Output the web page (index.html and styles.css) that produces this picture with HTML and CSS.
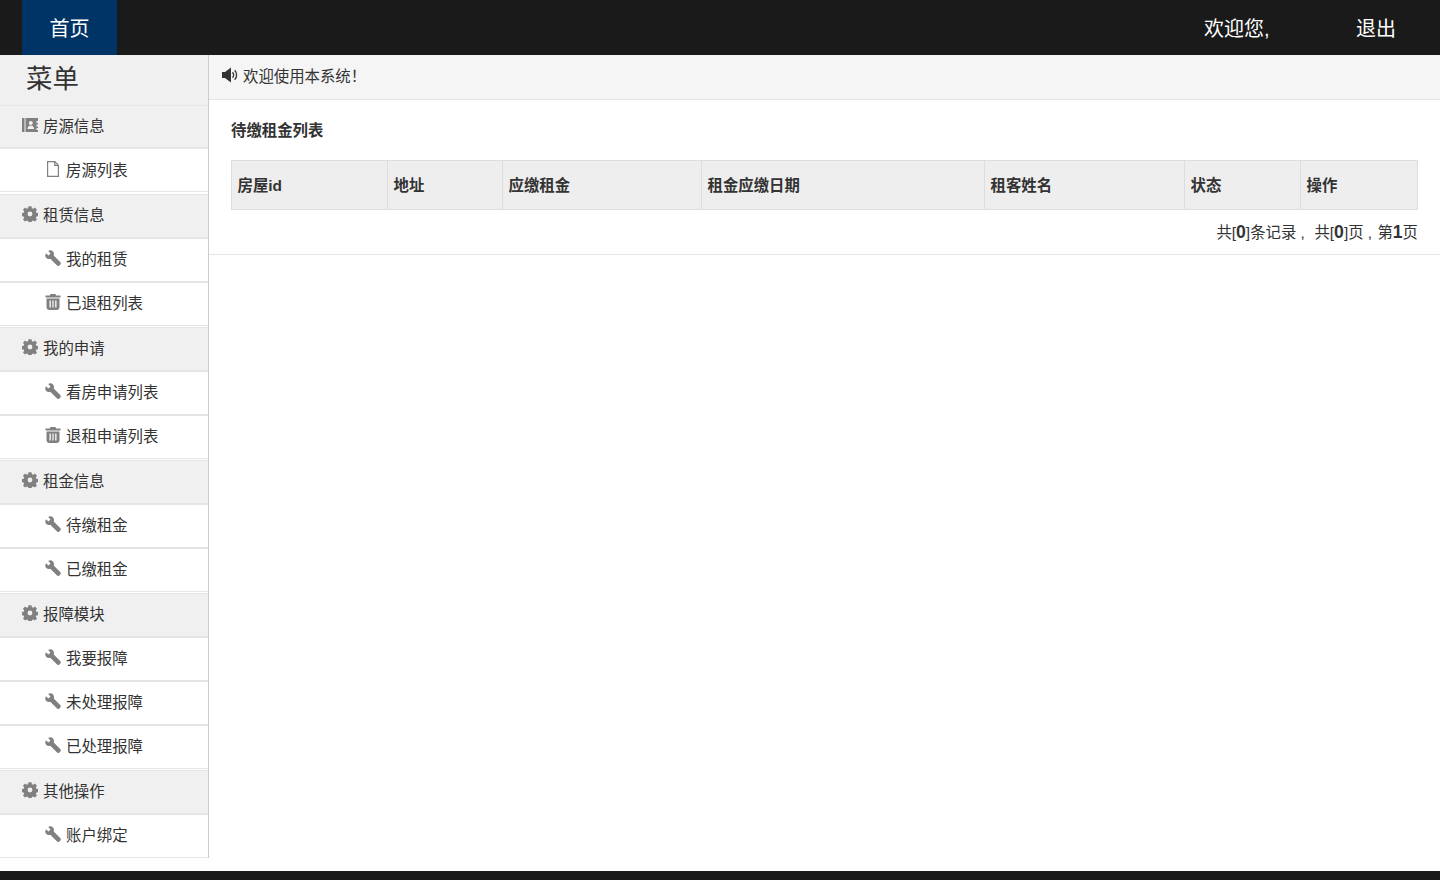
FILE: index.html
```html
<!DOCTYPE html>
<html lang="zh-CN">
<head>
<meta charset="utf-8">
<title>首页</title>
<link rel="stylesheet" href="styles.css">
</head>
<body>
<svg class="defs" width="0" height="0" aria-hidden="true">
  <symbol id="i-cog" viewBox="0 0 16 16"><path fill-rule="evenodd" d="M6.500.2h3l.4 2 1.300.6 1.700-1.200 2.100 2.100-1.200 1.700.6 1.300 2 .4v3l-2 .4-.6 1.300 1.200 1.700-2.100 2.100-1.700-1.200-1.300.6-.4 2h-3l-.4-2-1.300-.6-1.700 1.200-2.100-2.100 1.200-1.700-.6-1.300-2-.4v-3l2-.4.6-1.300-1.200-1.700 2.100-2.100 1.700 1.200 1.300-.6zM8 5.600a2.400 2.400 0 1 0 0 4.800 2.400 2.400 0 0 0 0-4.800z"/></symbol>
  <symbol id="i-book" viewBox="0 0 16 16"><path fill-rule="evenodd" d="M0 1h2.500v14H0zM3.500 1H16v3h-1.500v2H16v1.500h-1.500v2H16V11h-1.500v2H16v2H3.500zM8.800 4a2 2 0 1 0 0 4 2 2 0 0 0 0-4zM5.500 12h6.500c0-2.200-1.200-3.500-3.200-3.500S5.500 9.800 5.500 12z"/></symbol>
  <symbol id="i-file" viewBox="0 0 16 16"><path fill="none" stroke="currentColor" stroke-width="1.200" d="M2.600.6h7.300l3.500 3.600v11.200H2.600zM9.700.8v3.600h3.600"/></symbol>
  <symbol id="i-wrench" viewBox="0 0 16 16"><path d="M1 3.200 3.400 5.500 5.500 3.400 3.200 1C4.800-.1 6.900.2 8 1.400c1 1 1.300 2.600.7 4l6.500 6.500c.8.800.8 1.900.1 2.600l-.9.900c-.7.700-1.800.7-2.600-.1L5.300 8.800c-1.400.6-3 .3-4-.7C.1 6.900-.1 4.800 1 3.200z"/></symbol>
  <symbol id="i-trash" viewBox="0 0 16 16"><path fill-rule="evenodd" d="M5.500 0h5l.6 1.500H15.500v2H.5v-2h4.400zM1.500 4.500h13v8.500c0 1.700-1.200 3-2.900 3H4.400c-1.700 0-2.900-1.300-2.900-3zm3 2v7h1.300v-7zm2.900 0v7h1.200v-7zm2.800 0v7h1.300v-7z"/></symbol>
  <symbol id="i-volume" viewBox="0 0 16 16"><path d="M0 5h3L9 .5v15L3 11H0z"/><path fill="none" stroke="currentColor" stroke-width="1.300" d="M10.500 5.300c1.300 1.500 1.300 3.900 0 5.400M12.700 3.200c2.500 2.700 2.500 6.900 0 9.600"/></symbol>
</svg>

<header class="topbar">
  <a class="home">首页</a>
  <div class="user">
    <span class="welcome">欢迎您,</span>
    <a class="logout">退出</a>
  </div>
</header>

<div class="layout">
  <nav class="sidebar">
    <div class="menu-title">菜单</div>

    <div class="group group-first">
      <div class="section"><svg class="icon"><use href="#i-book"/></svg>房源信息</div>
      <a class="item"><svg class="icon"><use href="#i-file"/></svg>房源列表</a>
    </div>

    <div class="group">
      <div class="section"><svg class="icon"><use href="#i-cog"/></svg>租赁信息</div>
      <a class="item"><svg class="icon"><use href="#i-wrench"/></svg>我的租赁</a>
      <a class="item"><svg class="icon"><use href="#i-trash"/></svg>已退租列表</a>
    </div>

    <div class="group">
      <div class="section"><svg class="icon"><use href="#i-cog"/></svg>我的申请</div>
      <a class="item"><svg class="icon"><use href="#i-wrench"/></svg>看房申请列表</a>
      <a class="item"><svg class="icon"><use href="#i-trash"/></svg>退租申请列表</a>
    </div>

    <div class="group">
      <div class="section"><svg class="icon"><use href="#i-cog"/></svg>租金信息</div>
      <a class="item"><svg class="icon"><use href="#i-wrench"/></svg>待缴租金</a>
      <a class="item"><svg class="icon"><use href="#i-wrench"/></svg>已缴租金</a>
    </div>

    <div class="group">
      <div class="section"><svg class="icon"><use href="#i-cog"/></svg>报障模块</div>
      <a class="item"><svg class="icon"><use href="#i-wrench"/></svg>我要报障</a>
      <a class="item"><svg class="icon"><use href="#i-wrench"/></svg>未处理报障</a>
      <a class="item"><svg class="icon"><use href="#i-wrench"/></svg>已处理报障</a>
    </div>

    <div class="group">
      <div class="section"><svg class="icon"><use href="#i-cog"/></svg>其他操作</div>
      <a class="item"><svg class="icon"><use href="#i-wrench"/></svg>账户绑定</a>
    </div>
  </nav>

  <main class="main">
    <div class="notice"><svg class="icon notice-icon"><use href="#i-volume"/></svg>欢迎使用本系统！</div>
    <section class="panel">
      <h2 class="panel-title">待缴租金列表</h2>
      <table class="data">
        <thead>
          <tr>
            <th class="c1">房屋id</th>
            <th class="c2">地址</th>
            <th class="c3">应缴租金</th>
            <th class="c4">租金应缴日期</th>
            <th class="c5">租客姓名</th>
            <th class="c6">状态</th>
            <th class="c7">操作</th>
          </tr>
        </thead>
      </table>
      <div class="pager">共[<b>0</b>]条记录<span class="comma">&nbsp;,&nbsp;</span> 共[<b>0</b>]页<span class="comma">&nbsp;,&nbsp;</span>第<b>1</b>页</div>
    </section>
  </main>
</div>

<footer class="footer"></footer>
</body>
</html>
```

FILE: styles.css
```css
* { box-sizing: border-box; }
html, body { margin: 0; padding: 0; height: 880px; overflow: hidden; }
body {
  display: flex;
  flex-direction: column;
  background: #fff;
  color: #333;
  font-family: "Liberation Sans", "Noto Sans CJK SC", sans-serif;
  font-size: 15.4px;
}
.defs { position: absolute; }

.topbar {
  flex: none;
  height: 55px;
  display: flex;
  justify-content: space-between;
  padding-left: 22px;
  background: #1a1a1a;
  color: #fff;
  font-size: 20px;
  line-height: 59px;
}
.home { width: 95px; height: 55px; text-align: center; background: #003366; }
.user { display: flex; }
.welcome { width: 152px; }
.logout { width: 84px; }

.layout { flex: 1; display: flex; align-items: flex-start; min-height: 0; }

.sidebar {
  flex: none;
  width: 209px;
  border-right: 1px solid #ccc;
  background: #fff;
}
.menu-title {
  height: 50px;
  padding-left: 26px;
  background: #f0f0f0;
  font-size: 26.4px;
  line-height: 48px;
}
.group { margin-bottom: 1px; background: #e5e5e5; }
.group-first { margin-bottom: 2px; }
.group:last-child { margin-bottom: 0; }
.section, .item {
  display: flex;
  align-items: center;
  height: 44px;
  padding-bottom: 5px;
  border-top: 1px solid #e5e5e5;
  border-bottom: 1px solid #e5e5e5;
}
.group-first .section { height: 43px; padding-bottom: 3px; }
.group-first .item { padding-bottom: 3px; }
.section { padding-left: 22px; background: #f0f0f0; }
.item { padding-left: 45px; background: #fff; }
.icon {
  flex: none;
  width: 16px;
  height: 16px;
  margin-right: 5px;
  fill: #808080;
  color: #808080;
}

.main { flex: 1; min-width: 0; }
.notice {
  display: flex;
  align-items: center;
  height: 45px;
  padding: 0 0 5px 13px;
  background: #f5f5f5;
  border-bottom: 1px solid #e5e5e5;
}
.notice-icon { fill: #333; color: #333; margin-right: 5px; }
.panel {
  height: 155px;
  padding: 0 22px;
  border-bottom: 1px solid #e5e5e5;
}
.panel-title {
  margin: 0;
  height: 60px;
  padding-top: 20px;
  font-size: 15.4px;
  line-height: 22px;
  font-weight: bold;
}
.data {
  width: 1186px;
  table-layout: fixed;
  border-collapse: collapse;
}
.data th {
  height: 49px;
  padding: 0 5.500px 2px;
  text-align: left;
  background: #eee;
  border: 1px solid #ddd;
  font-weight: bold;
}
.c1 { width: 156px; }
.c2 { width: 115px; }
.c3 { width: 199px; }
.c4 { width: 283px; }
.c5 { width: 200px; }
.c6 { width: 116px; }
.c7 { width: 117px; }
.pager {
  margin-top: 12px;
  text-align: right;
  line-height: 22px;
}
.pager b { font-size: 17.6px; line-height: 20px; }
.comma { padding-right: 1px; }

.footer { flex: none; height: 9px; background: #1a1a1a; }
```
